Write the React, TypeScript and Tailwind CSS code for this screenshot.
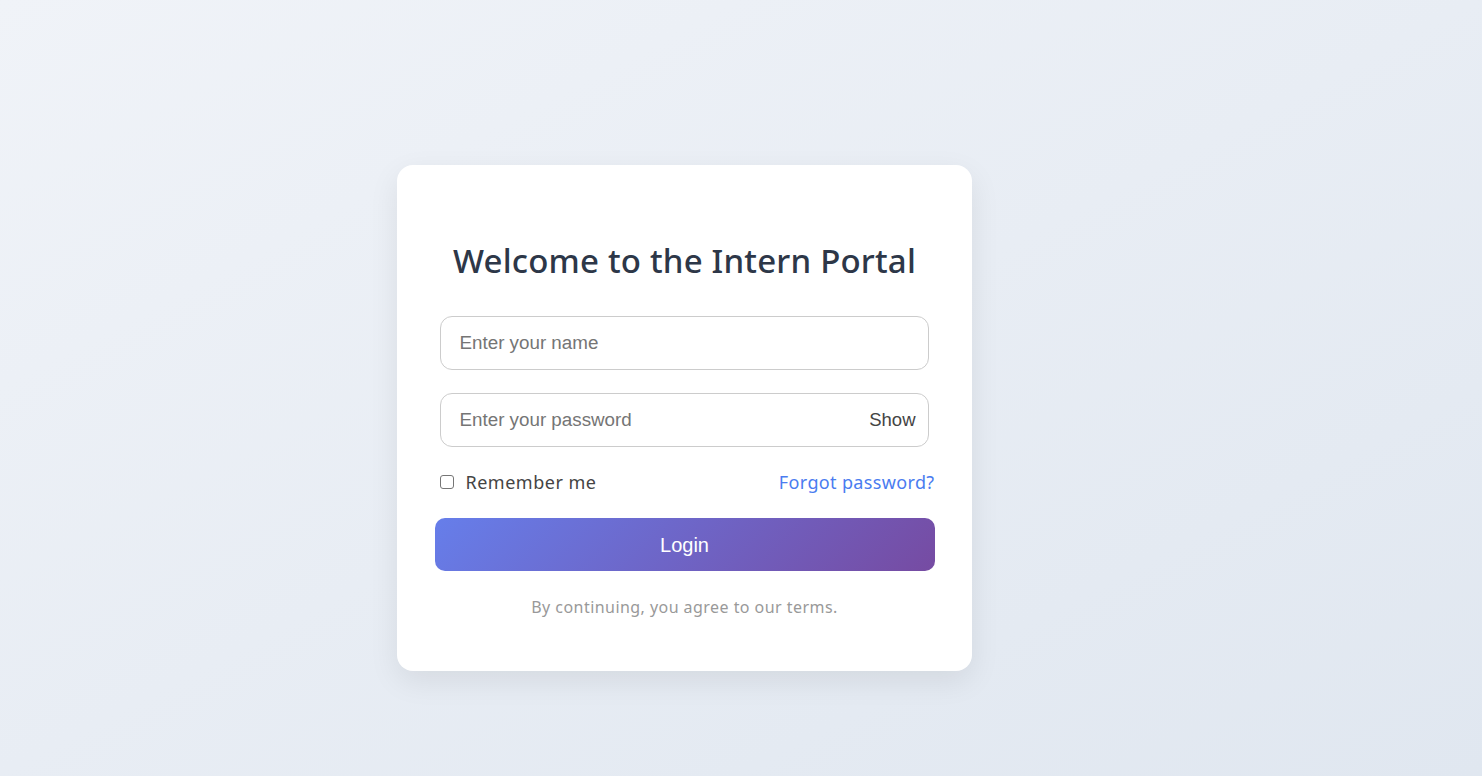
import React from "react";

export default function App() {
  const poppins = { fontFamily: '"Noto Sans", "Open Sans", sans-serif' };
  return (
    <div className="min-h-[776px] w-full flex items-center justify-center bg-gradient-to-br from-[#f0f3f8] to-[#e0e7f0]">
      <div
        className="mr-[114px] mt-[60px] w-[575px] h-[506px] bg-white rounded-[16px] shadow-[0_10px_30px_rgba(0,0,0,0.08)] pl-[38px] pr-[37px] pt-[72px] flex flex-col"
        style={poppins}
      >
        <h1 className="text-center text-[33px] font-medium tracking-[0.2px] text-[#2d3748] leading-[48px]">
          Welcome to the Intern Portal
        </h1>
        <div className="mt-[31px] flex flex-col pl-[5px] pr-[6px]">
          <div className="h-[54px] w-full border border-[#cccccc] rounded-[12px] flex items-center px-[19px]">
            <span className="text-[18.8px] text-[#757575] [font-family:'Liberation_Sans',Arial,sans-serif]">
              Enter your name
            </span>
          </div>
          <div className="mt-[23px] h-[54px] w-full border border-[#cccccc] rounded-[12px] flex items-center justify-between pl-[19px] pr-[12px]">
            <span className="text-[18.8px] text-[#757575] [font-family:'Liberation_Sans',Arial,sans-serif]">
              Enter your password
            </span>
            <span className="text-[18.5px] text-[#444] [font-family:'Liberation_Sans',Arial,sans-serif]">
              Show
            </span>
          </div>
        </div>
        <div className="mt-[22px] flex items-center justify-between pl-[5px] h-[26px]">
          <label className="flex items-center gap-[12px] text-[18px] tracking-[0.5px] text-[#444]">
            <span className="w-[14px] h-[14px] border border-[#767676] rounded-[3px] bg-white"></span>
            Remember me
          </label>
          <span className="text-[18px] tracking-[0.35px] text-[#4a7cf0]">Forgot password?</span>
        </div>
        <button className="mt-[23px] h-[53px] w-full rounded-[10px] bg-[linear-gradient(135deg,#667eea,#764ba2)] text-white text-[20px] [font-family:'Liberation_Sans',Arial,sans-serif]">
          Login
        </button>
        <p className="mt-[24px] text-center text-[16px] tracking-[0.45px] text-[#999]">
          By continuing, you agree to our terms.
        </p>
      </div>
    </div>
  );
}
